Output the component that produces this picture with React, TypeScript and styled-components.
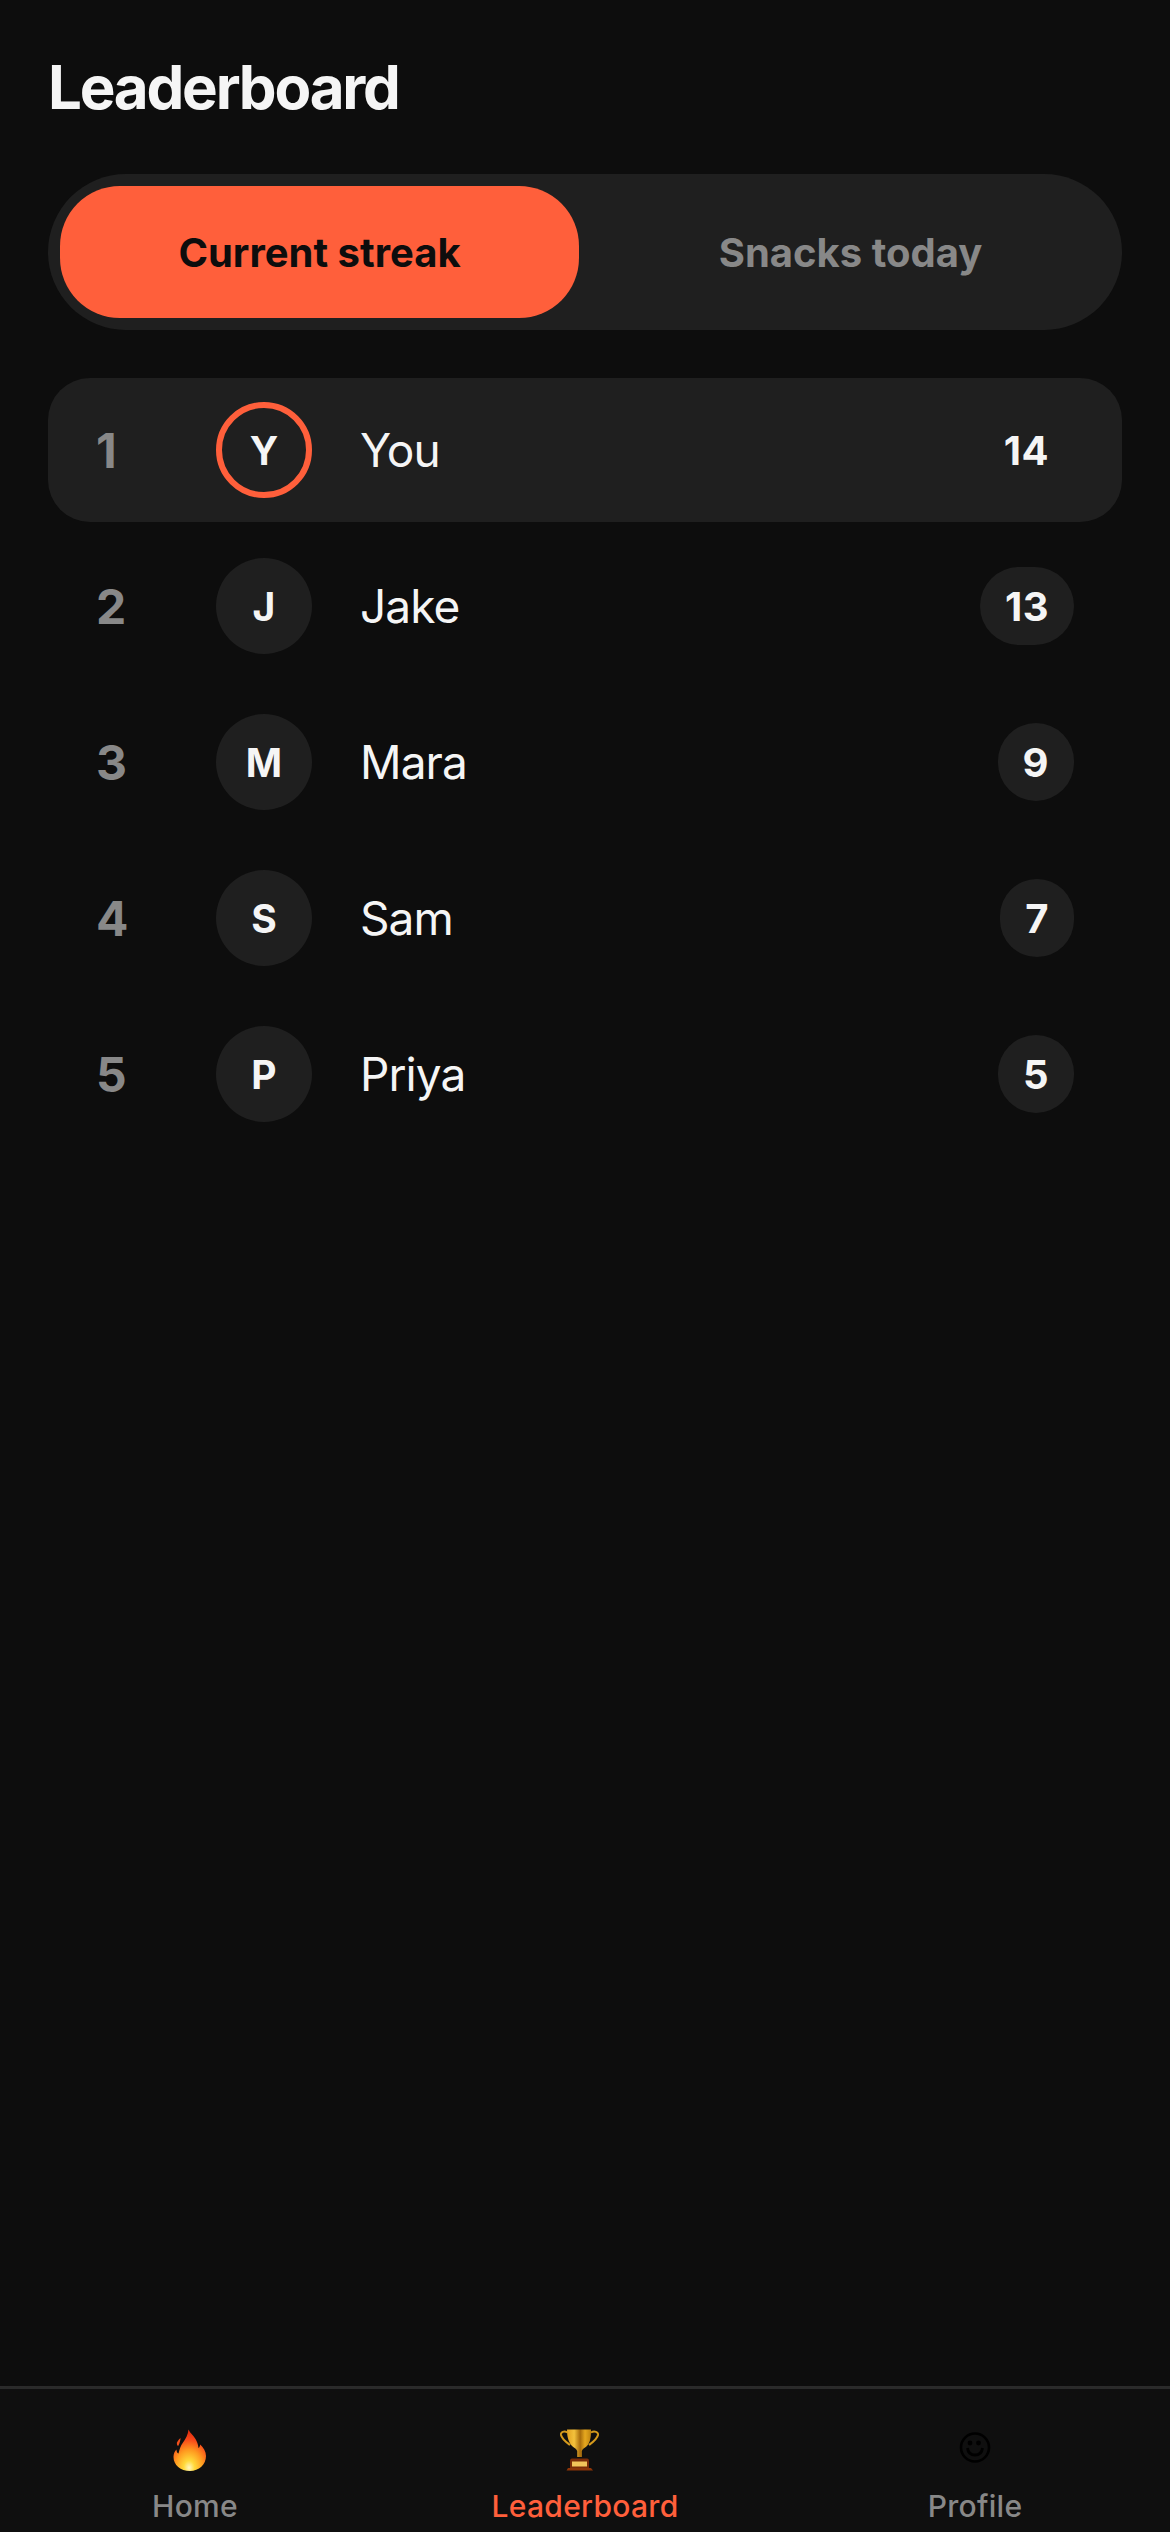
import styled, { createGlobalStyle } from "styled-components";

const GlobalStyle = createGlobalStyle`
  html, body {
    margin: 0;
    background: #0d0d0d;
  }
  * {
    box-sizing: border-box;
  }
`;

const ACCENT = "#ff5f3b";

const players = [
  { rank: 1, name: "You", score: 14, isYou: true },
  { rank: 2, name: "Jake", score: 13 },
  { rank: 3, name: "Mara", score: 9 },
  { rank: 4, name: "Sam", score: 7 },
  { rank: 5, name: "Priya", score: 5 },
];

function FlameIcon() {
  return (
    <svg width={60} height={60} viewBox="0 0 60 60">
      <defs>
        <radialGradient id="flameFill" cx="0.48" cy="0.92" r="0.85">
          <stop offset="0" stopColor="#fff7c0" />
          <stop offset="0.2" stopColor="#ffd93a" />
          <stop offset="0.5" stopColor="#ff9a1f" />
          <stop offset="0.8" stopColor="#f8481a" />
          <stop offset="1" stopColor="#e2300f" />
        </radialGradient>
      </defs>
      <path
        fill="url(#flameFill)"
        d="M23.5 9.500C25 13 28 15 30.500 19C32 21.500 33 24 33.500 28C34.500 27.500 35 25.500 35.200 24.500C38.500 27.500 41 31.500 41 36C41 44.500 34 51 25 51C15.500 51 8.500 45 8.500 37C8.500 33.500 9.500 31.500 11.500 29.500C11.500 31 12 33 13.500 33.500C14.500 29 15.500 26 18 22.500C20.500 19 23 15 23.500 9.500Z"
      />
      <path
        fill="#f2501c"
        d="M12 22.500C13 20.500 14.500 18.500 15.500 18C15.500 20 14.800 23 13.500 25.500C12.500 26.500 11.500 24.500 12 22.500Z"
      />
    </svg>
  );
}

function TrophyIcon() {
  return (
    <svg width={60} height={60} viewBox="0 0 60 60">
      <defs>
        <linearGradient id="cupFill" x1="0" x2="1" y1="0" y2="0">
          <stop offset="0" stopColor="#e0a020" />
          <stop offset="0.3" stopColor="#f4c23c" />
          <stop offset="0.55" stopColor="#a86c0c" />
          <stop offset="0.75" stopColor="#e6a81f" />
          <stop offset="1" stopColor="#c08410" />
        </linearGradient>
      </defs>
      <path
        fill="none"
        stroke="#d4991c"
        strokeWidth={2}
        d="M12.500 12.500C9 10.500 5.500 12 6 15C6.800 19 11 22 15 25M36 12.500C39.500 10.500 43.500 12 43 15C42.200 19 38 22 34 25"
      />
      <path
        fill="url(#cupFill)"
        d="M12 9.500H36C36 17 35.500 22 32 26C30 28 27.500 28.500 26.800 31V37H22.200V31C21.500 28.500 19 28 17 26C13.500 22 12 17 12 9.500Z"
      />
      <path fill="#7a2c08" d="M15 41.500C15 39.500 15.500 38.500 17 38.500H32C33.500 38.500 34 39.500 34 41.500V48H15Z" />
      <rect x={17} y={41.500} width={15} height={5} fill="#f2c45a" />
      <path fill="#8c3408" d="M13 48H36L38 50.500H11.500Z" />
    </svg>
  );
}

function SmileIcon() {
  return (
    <svg width={60} height={60} viewBox="0 0 60 60" fill="none" stroke="#000" strokeWidth={2.600}>
      <circle cx={30} cy={27.500} r={14} />
      <path strokeWidth={2.800} d="M22.500 28C23 32.500 26 35 30 35C34 35 37 32.500 37.500 28" />
      <circle cx={25} cy={23} r={2.400} fill="#000" stroke="none" />
      <circle cx={33.500} cy={23} r={2.400} fill="#000" stroke="none" />
    </svg>
  );
}

export default function App() {
  return (
    <>
      <GlobalStyle />
      <Page>
        <Main>
          <Title>Leaderboard</Title>
          <Segmented>
            <Segment $active>Current streak</Segment>
            <Segment>Snacks today</Segment>
          </Segmented>
          <Board>
            {players.map((player) => (
              <Row key={player.rank} $highlight={player.isYou}>
                <Rank>{player.rank}</Rank>
                <Avatar $ring={player.isYou}>{player.name[0]}</Avatar>
                <Name>{player.name}</Name>
                <Score $plain={player.isYou}>{player.score}</Score>
              </Row>
            ))}
          </Board>
        </Main>
        <TabBar>
          <Tab>
            <FlameIcon />
            <TabLabel>Home</TabLabel>
          </Tab>
          <Tab $active>
            <TrophyIcon />
            <TabLabel>Leaderboard</TabLabel>
          </Tab>
          <Tab>
            <SmileIcon />
            <TabLabel>Profile</TabLabel>
          </Tab>
        </TabBar>
      </Page>
    </>
  );
}

const Page = styled.div`
  min-height: 100vh;
  display: flex;
  flex-direction: column;
  background: #0d0d0d;
  color: #f5f5f5;
  font-family: Inter, "Liberation Sans", sans-serif;
`;

const Main = styled.main`
  flex: 1;
  padding: 48px 48px 0;
`;

const Title = styled.h1`
  margin: 0;
  font-size: 60px;
  font-weight: 700;
  line-height: 78px;
  letter-spacing: -2.2px;
`;

const Segmented = styled.div`
  display: grid;
  grid-template-columns: 1fr 1fr;
  gap: 12px;
  margin-top: 48px;
  padding: 12px;
  border-radius: 78px;
  background: #1f1f1f;
`;

const Segment = styled.div<{ $active?: boolean }>`
  height: 132px;
  display: flex;
  align-items: center;
  justify-content: center;
  border-radius: 60px;
  font-size: 40px;
  font-weight: 700;
  background: ${({ $active }) => ($active ? ACCENT : "transparent")};
  color: ${({ $active }) => ($active ? "#0d0d0d" : "#888888")};
`;

const Board = styled.div`
  display: flex;
  flex-direction: column;
  gap: 12px;
  margin-top: 48px;
`;

const Row = styled.div<{ $highlight?: boolean }>`
  height: 144px;
  display: flex;
  align-items: center;
  padding: 0 48px;
  border-radius: 42px;
  background: ${({ $highlight }) => ($highlight ? "#1f1f1f" : "transparent")};
`;

const Rank = styled.span`
  width: 120px;
  font-size: 48px;
  font-weight: 700;
  color: #888888;
`;

const Avatar = styled.div<{ $ring?: boolean }>`
  width: 96px;
  height: 96px;
  flex: none;
  display: flex;
  align-items: center;
  justify-content: center;
  border-radius: 50%;
  font-size: 39px;
  font-weight: 700;
  background: #1f1f1f;
  border: ${({ $ring }) => ($ring ? `6px solid ${ACCENT}` : "none")};
`;

const Name = styled.span`
  flex: 1;
  margin-left: 48px;
  font-size: 46px;
  font-weight: 400;
  letter-spacing: -0.9px;
`;

const Score = styled.span<{ $plain?: boolean }>`
  height: 78px;
  display: flex;
  align-items: center;
  padding: 0 25px;
  border-radius: 39px;
  font-size: 40px;
  font-weight: 700;
  letter-spacing: 0.5px;
  background: ${({ $plain }) => ($plain ? "transparent" : "#1f1f1f")};
`;

const TabBar = styled.nav`
  height: 146px;
  display: grid;
  grid-template-columns: repeat(3, 1fr);
  border-top: 3px solid #2a2a2a;
  background: #0f0f0f;
`;

const Tab = styled.div<{ $active?: boolean }>`
  display: flex;
  flex-direction: column;
  align-items: center;
  padding-top: 31px;
  color: ${({ $active }) => ($active ? ACCENT : "#888888")};
`;

const TabLabel = styled.span`
  margin-top: 8px;
  font-size: 30px;
  font-weight: 500;
  line-height: 36px;
  letter-spacing: 0.3px;
`;
